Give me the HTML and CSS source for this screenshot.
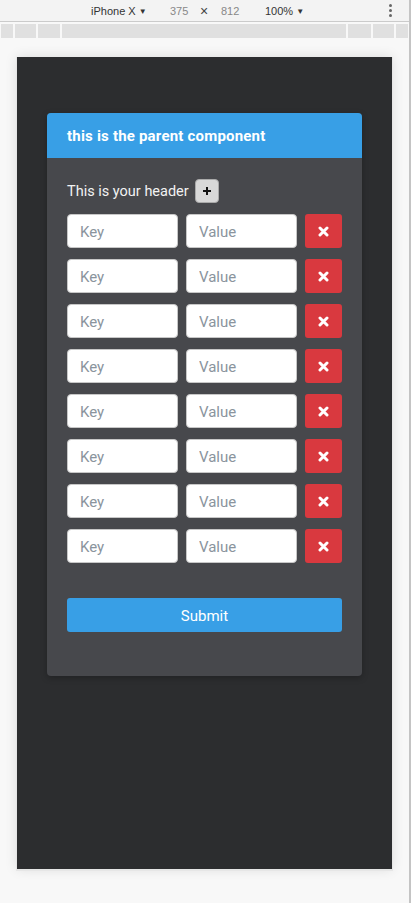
FILE: index.html
```html
<!DOCTYPE html>
<html>
<head>
<meta charset="utf-8">
<link rel="stylesheet" href="styles.css">
</head>
<body>
<div class="devtools">
  <div class="toolbar">
    <div class="tb-device">iPhone X <span class="caret">▼</span></div>
    <div class="tb-dim">375</div>
    <div class="tb-x">×</div>
    <div class="tb-dim">812</div>
    <div class="tb-zoom">100% <span class="caret">▼</span></div>
    <div class="tb-more"><i></i><i></i><i></i></div>
  </div>
  <div class="rulers">
    <div class="seg s1"></div><div class="seg s2"></div><div class="seg s3"></div><div class="seg s4"></div><div class="seg s5"></div><div class="seg s6"></div><div class="seg s7"></div>
  </div>
  <div class="stage">
    <div class="screen">
      <div class="card">
        <div class="card-header">this is the parent component</div>
        <div class="card-body">
          <div class="title-row">
            <span>This is your header</span>
            <button class="add-btn"><svg width="10" height="10" viewBox="0 0 10 10"><path d="M5 1v8M1 5h8" stroke="#111" stroke-width="2"/></svg></button>
          </div>
          <div class="rows">
            <div class="kv-row"><input class="field" placeholder="Key"><input class="field" placeholder="Value"><button class="del-btn"><svg width="11" height="11" viewBox="0 0 11 11"><path d="M2 2l7 7M9 2l-7 7" stroke="#fff" stroke-width="3" stroke-linecap="round"/></svg></button></div>
            <div class="kv-row"><input class="field" placeholder="Key"><input class="field" placeholder="Value"><button class="del-btn"><svg width="11" height="11" viewBox="0 0 11 11"><path d="M2 2l7 7M9 2l-7 7" stroke="#fff" stroke-width="3" stroke-linecap="round"/></svg></button></div>
            <div class="kv-row"><input class="field" placeholder="Key"><input class="field" placeholder="Value"><button class="del-btn"><svg width="11" height="11" viewBox="0 0 11 11"><path d="M2 2l7 7M9 2l-7 7" stroke="#fff" stroke-width="3" stroke-linecap="round"/></svg></button></div>
            <div class="kv-row"><input class="field" placeholder="Key"><input class="field" placeholder="Value"><button class="del-btn"><svg width="11" height="11" viewBox="0 0 11 11"><path d="M2 2l7 7M9 2l-7 7" stroke="#fff" stroke-width="3" stroke-linecap="round"/></svg></button></div>
            <div class="kv-row"><input class="field" placeholder="Key"><input class="field" placeholder="Value"><button class="del-btn"><svg width="11" height="11" viewBox="0 0 11 11"><path d="M2 2l7 7M9 2l-7 7" stroke="#fff" stroke-width="3" stroke-linecap="round"/></svg></button></div>
            <div class="kv-row"><input class="field" placeholder="Key"><input class="field" placeholder="Value"><button class="del-btn"><svg width="11" height="11" viewBox="0 0 11 11"><path d="M2 2l7 7M9 2l-7 7" stroke="#fff" stroke-width="3" stroke-linecap="round"/></svg></button></div>
            <div class="kv-row"><input class="field" placeholder="Key"><input class="field" placeholder="Value"><button class="del-btn"><svg width="11" height="11" viewBox="0 0 11 11"><path d="M2 2l7 7M9 2l-7 7" stroke="#fff" stroke-width="3" stroke-linecap="round"/></svg></button></div>
            <div class="kv-row"><input class="field" placeholder="Key"><input class="field" placeholder="Value"><button class="del-btn"><svg width="11" height="11" viewBox="0 0 11 11"><path d="M2 2l7 7M9 2l-7 7" stroke="#fff" stroke-width="3" stroke-linecap="round"/></svg></button></div>
          </div>
          <button class="submit-btn">Submit</button>
        </div>
      </div>
    </div>
  </div>
</div>
</body>
</html>
```

FILE: styles.css
```css
* { box-sizing: border-box; }
html, body { margin: 0; padding: 0; }
body {
  background: #f8f8f8;
  font-family: "Liberation Sans", Arial, sans-serif;
  width: 411px;
  height: 903px;
  overflow: hidden;
}
.devtools {
  width: 411px;
  height: 903px;
  border-right: 2px solid #c4c4c4;
  background: #f8f8f8;
}
.toolbar {
  height: 22px;
  border-bottom: 1px solid #cbcbcb;
  background: #f3f3f3;
  display: flex;
  align-items: center;
  font-size: 11px;
  color: #333;
  padding-left: 91px;
}
.caret { font-size: 8px; vertical-align: 1px; }
.tb-device { width: 79px; }
.tb-dim { color: #888; width: 17px; }
.tb-x { width: 34px; text-align: center; font-size: 14px; color: #444; }
.tb-zoom { margin-left: 27px; }
.tb-more {
  margin-left: auto;
  margin-right: 17px;
  display: flex;
  flex-direction: column;
  gap: 2px;
}
.tb-more i { display: block; width: 3px; height: 3px; background: #666; border-radius: 50%; }
.rulers {
  display: flex;
  gap: 2px;
  height: 14px;
  margin-top: 2px;
  padding-left: 1px;
}
.seg { background: #e0e0e0; height: 14px; }
.s1 { width: 12px; }
.s2 { width: 21px; }
.s3 { width: 22px; }
.s4 { width: 284px; }
.s5 { width: 23px; }
.s6 { width: 21px; }
.s7 { width: 12px; }
.stage { padding: 19px 0 0 17px; }
.screen {
  width: 375px;
  height: 812px;
  background: #2c2d2f;
  box-shadow: 0 1px 0 1px #e6e6e6, 0 0 12px rgba(0,0,0,0.12);
  padding: 56px 30px 0;
}
.card {
  background: #47484c;
  border-radius: 4px;
  overflow: hidden;
  box-shadow: 0 2px 6px rgba(0,0,0,0.25);
}
.card-header {
  height: 45px;
  line-height: 43px;
  padding: 2px 20px 0;
  background: #389fe6;
  color: #fff;
  font-weight: bold;
  font-size: 15px;
  letter-spacing: 0.2px;
  font-family: Roboto, sans-serif;
}
.card-body { padding: 21px 20px 44px; }
.title-row {
  display: flex;
  align-items: center;
  gap: 6px;
  color: #f2f2f2;
  font-size: 14.5px;
  font-family: Roboto, sans-serif;
  height: 24px;
}
.add-btn {
  width: 24px;
  height: 24px;
  border: 1px solid #aaa;
  border-radius: 4px;
  background: #d8d8d8;
  padding: 0;
  display: flex;
  align-items: center;
  justify-content: center;
}
.rows {
  margin-top: 11px;
  display: flex;
  flex-direction: column;
  gap: 11px;
}
.kv-row { display: flex; gap: 8px; height: 34px; }
.field {
  width: 111px;
  height: 34px;
  border: 1px solid #c7c7c7;
  border-radius: 4px;
  background: #fff;
  padding: 1px 12px 0;
  font-size: 15px;
  font-family: Roboto, sans-serif;
}
.field::placeholder { color: #8a949d; }
.del-btn {
  width: 37px;
  height: 34px;
  border: none;
  border-radius: 3px;
  background: #d9393f;
  padding: 0;
  display: flex;
  align-items: center;
  justify-content: center;
}
.submit-btn {
  display: block;
  width: 100%;
  height: 34px;
  margin-top: 35px;
  border: none;
  border-radius: 3px;
  background: #389fe6;
  color: #fff;
  font-size: 15px;
  padding-top: 2px;
  font-family: Roboto, sans-serif;
}
```
